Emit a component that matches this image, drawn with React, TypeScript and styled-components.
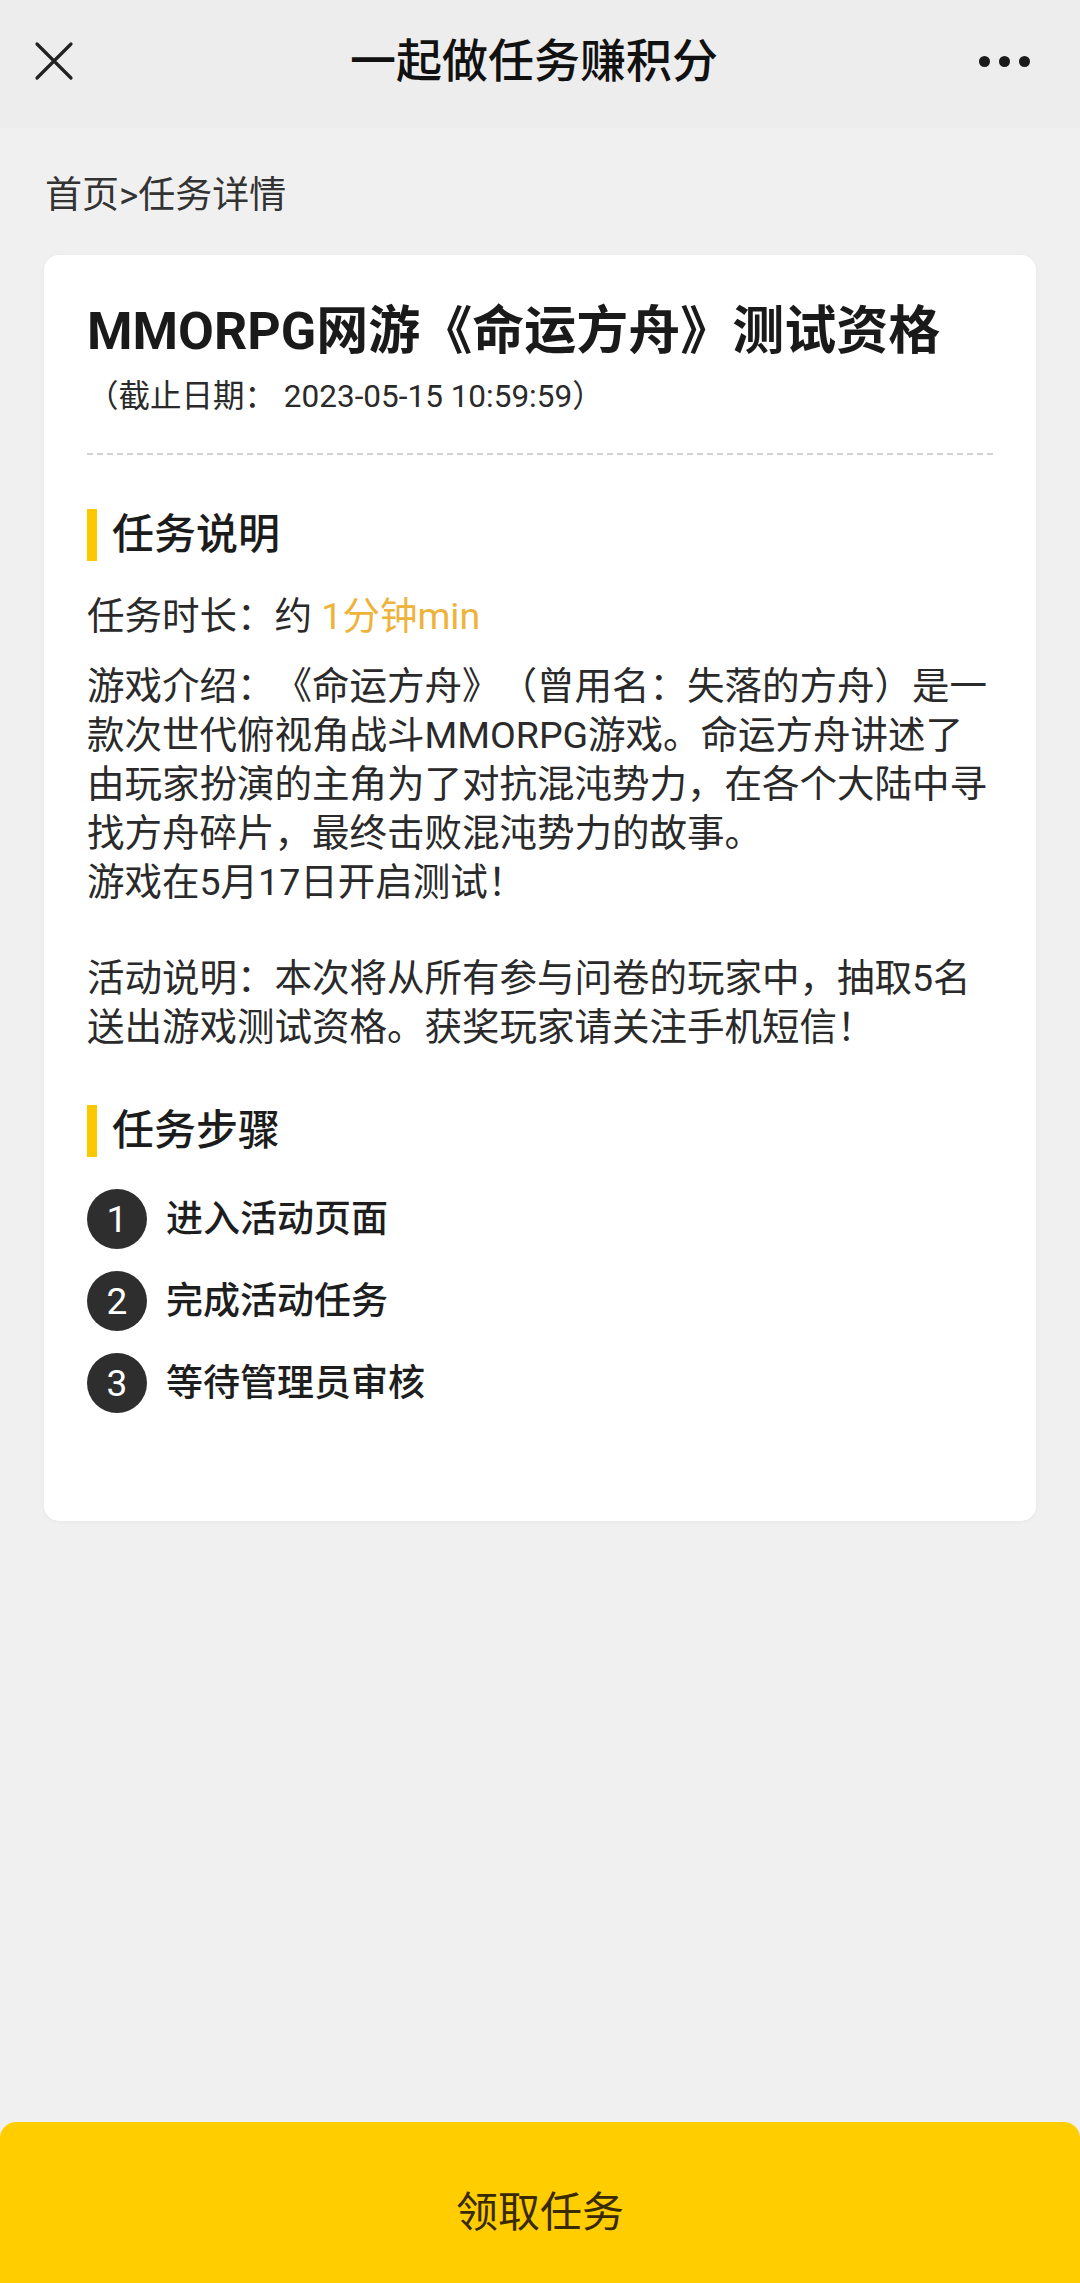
import React from "react";
import styled, { createGlobalStyle } from "styled-components";

const GlobalStyle = createGlobalStyle`
  html, body {
    margin: 0;
    padding: 0;
    background: #f0f0f0;
  }
  body {
    font-family: Roboto, "Noto Sans CJK SC", "Noto Sans", sans-serif;
    color: #222;
    text-spacing-trim: space-all;
  }
  * { box-sizing: border-box; }
`;

const Page = styled.div`
  min-height: 100vh;
  display: flex;
  flex-direction: column;
  background: #f0f0f0;
`;

const Header = styled.header`
  height: 128px;
  background: #ededed;
  display: grid;
  grid-template-columns: 150px 1fr 150px;
  align-items: center;
  padding-bottom: 6px;
`;

const IconSlot = styled.div<{ $align: "start" | "end" }>`
  display: flex;
  justify-content: ${(p) => (p.$align === "start" ? "flex-start" : "flex-end")};
  padding: ${(p) => (p.$align === "start" ? "0 0 0 34px" : "0 50px 0 0")};
`;

const HeaderTitle = styled.h1`
  margin: 0;
  text-align: center;
  font-size: 46px;
  font-weight: 500;
  color: #111;
  line-height: 60px;
  padding-right: 12px;
`;

const Dots = styled.div`
  display: flex;
  gap: 9px;
  span {
    width: 11px;
    height: 11px;
    border-radius: 50%;
    background: #1a1a1a;
  }
`;

const Breadcrumb = styled.div`
  margin: 44px 0 0 45px;
  font-size: 37px;
  line-height: 48px;
  color: #333;
`;

const Card = styled.section`
  margin: 35px 44px 0;
  background: #fff;
  border-radius: 15px;
  padding: 44px 43px 108px;
  box-shadow: 0 1px 4px rgba(0, 0, 0, 0.04);
`;

const Title = styled.h2`
  margin: 0;
  font-size: 52px;
  line-height: 66px;
  font-weight: 700;
  color: #1a1a1a;
  white-space: nowrap;
`;

const Deadline = styled.div`
  margin-top: 12px;
  font-size: 31.5px;
  line-height: 40px;
  color: #2a2a2a;
`;

const Divider = styled.hr`
  margin: 36px 0 0;
  border: none;
  border-top: 2px dashed #d2d2d2;
`;

const SectionHeader = styled.div<{ $top: number }>`
  margin-top: ${(p) => p.$top}px;
  display: flex;
  align-items: center;
  gap: 15px;
  height: 52px;
  &::before {
    content: "";
    width: 10px;
    height: 52px;
    background: #fcc800;
  }
`;

const SectionTitle = styled.h3`
  margin: 0;
  font-size: 42px;
  line-height: 52px;
  font-weight: 500;
  color: #1c1c1c;
`;

const Text = styled.p<{ $top: number }>`
  margin: ${(p) => p.$top}px 0 0;
  font-size: 37.5px;
  line-height: 49px;
  color: #2a2a2a;
`;

const Highlight = styled.span`
  color: #eeb33a;
`;

const Steps = styled.ol`
  list-style: none;
  margin: 32px 0 0;
  padding: 0;
  display: flex;
  flex-direction: column;
  gap: 22px;
`;

const Step = styled.li`
  display: flex;
  align-items: center;
  gap: 19px;
  height: 60px;
`;

const StepNum = styled.span`
  width: 60px;
  height: 60px;
  border-radius: 50%;
  background: #2e2e2e;
  color: #fff;
  font-size: 37px;
  display: flex;
  align-items: center;
  justify-content: center;
  line-height: 1;
`;

const StepText = styled.span`
  font-size: 37px;
  font-weight: 500;
  color: #1e1e1e;
  line-height: 49px;
`;

const ActionButton = styled.button`
  margin-top: auto;
  height: 161px;
  border: none;
  border-radius: 16px 16px 0 0;
  background: #ffcd00;
  color: #3a2a00;
  font-family: inherit;
  font-size: 42px;
  padding: 12px 0 0;
  cursor: pointer;
`;

const steps = ["进入活动页面", "完成活动任务", "等待管理员审核"];

export default function App() {
  return (
    <Page>
      <GlobalStyle />
      <Header>
        <IconSlot $align="start">
          <svg width="40" height="40" viewBox="0 0 40 40" fill="none">
            <path d="M3 3 L37 37 M37 3 L3 37" stroke="#222" strokeWidth="3.2" strokeLinecap="round" />
          </svg>
        </IconSlot>
        <HeaderTitle>一起做任务赚积分</HeaderTitle>
        <IconSlot $align="end">
          <Dots>
            <span />
            <span />
            <span />
          </Dots>
        </IconSlot>
      </Header>

      <Breadcrumb>首页&gt;任务详情</Breadcrumb>

      <Card>
        <Title>MMORPG网游《命运方舟》测试资格</Title>
        <Deadline>（截止日期： 2023-05-15 10:59:59）</Deadline>
        <Divider />

        <SectionHeader $top={54}>
          <SectionTitle>任务说明</SectionTitle>
        </SectionHeader>
        <Text $top={31}>
          任务时长：约 <Highlight>1分钟min</Highlight>
        </Text>
        <Text $top={21}>
          游戏介绍：《命运方舟》（曾用名：失落的方舟）是一
          <br />
          款次世代俯视角战斗MMORPG游戏。命运方舟讲述了
          <br />
          由玩家扮演的主角为了对抗混沌势力，在各个大陆中寻
          <br />
          找方舟碎片，最终击败混沌势力的故事。
          <br />
          游戏在5月17日开启测试！
        </Text>
        <Text $top={47}>
          活动说明：本次将从所有参与问卷的玩家中，抽取5名
          <br />
          送出游戏测试资格。获奖玩家请关注手机短信！
        </Text>

        <SectionHeader $top={53}>
          <SectionTitle>任务步骤</SectionTitle>
        </SectionHeader>
        <Steps>
          {steps.map((s, i) => (
            <Step key={s}>
              <StepNum>{i + 1}</StepNum>
              <StepText>{s}</StepText>
            </Step>
          ))}
        </Steps>
      </Card>

      <ActionButton>领取任务</ActionButton>
    </Page>
  );
}
